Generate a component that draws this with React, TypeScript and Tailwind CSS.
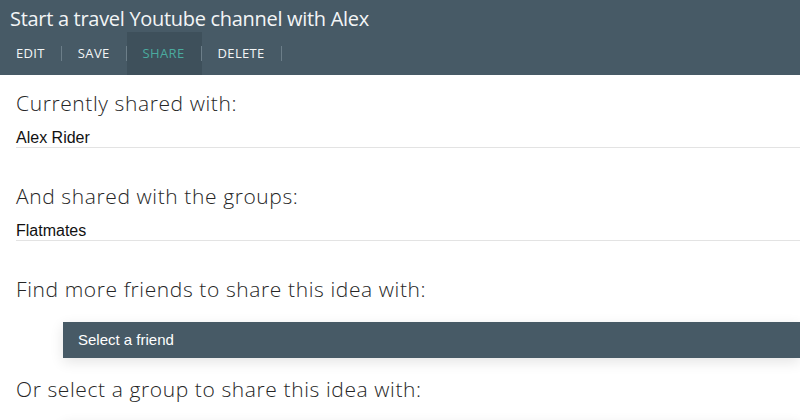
const navItems = ["EDIT", "SAVE", "SHARE", "DELETE"];

const Heading = ({ children, className = "" }: { children: string; className?: string }) => (
  <h2 className={`text-[21px] leading-7 font-light tracking-[0.6px] text-[#262626] ${className}`}>
    {children}
  </h2>
);

const Section = ({ title, items }: { title: string; items: string[] }) => (
  <div className="mb-[34px]">
    <Heading>{title}</Heading>
    {items.map((item) => (
      <div
        key={item}
        className="mt-[12px] border-b border-[#e3e3e3] font-['Liberation_Sans',sans-serif] text-base leading-[18px] text-[#111]"
      >
        {item}
      </div>
    ))}
  </div>
);

const SelectBar = ({ label, className = "" }: { label?: string; className?: string }) => (
  <div
    className={`ml-[47px] flex h-9 items-center bg-[#475a66] px-[15px] font-['Liberation_Sans',sans-serif] text-[15px] text-white shadow-[0_4px_14px_rgba(0,0,0,0.11)] ${className}`}
  >
    {label}
  </div>
);

export default function App() {
  return (
    <div className="h-[420px] w-[800px] overflow-hidden bg-white font-['Open_Sans',sans-serif]">
      <header className="h-[75px] bg-[#475a66] text-[#f3f5f6]">
        <h1 className="pl-[10px] pt-[6px] text-[20px] leading-[26px] tracking-[-0.3px]">
          Start a travel Youtube channel with Alex
        </h1>
        <nav className="flex h-[43px]">
          {navItems.map((label) => (
            <div
              key={label}
              className={`flex items-center ${label === "SHARE" ? "bg-[#3e505b] text-[#4aab9f]" : ""}`}
            >
              <span className="px-4 text-[13px] font-medium tracking-[0.35px]">{label}</span>
              <span className="h-[15px] w-px bg-[#6c7e89]" />
            </div>
          ))}
        </nav>
      </header>

      <main className="pl-4 pt-[14px]">
        <Section title="Currently shared with:" items={["Alex Rider"]} />
        <Section title="And shared with the groups:" items={["Flatmates"]} />

        <Heading>Find more friends to share this idea with:</Heading>
        <SelectBar label="Select a friend" className="mt-[19px]" />

        <Heading className="mt-[17px]">Or select a group to share this idea with:</Heading>
        {/* group picker starts just below the fold */}
        <SelectBar className="mt-[18px]" />
      </main>
    </div>
  );
}
